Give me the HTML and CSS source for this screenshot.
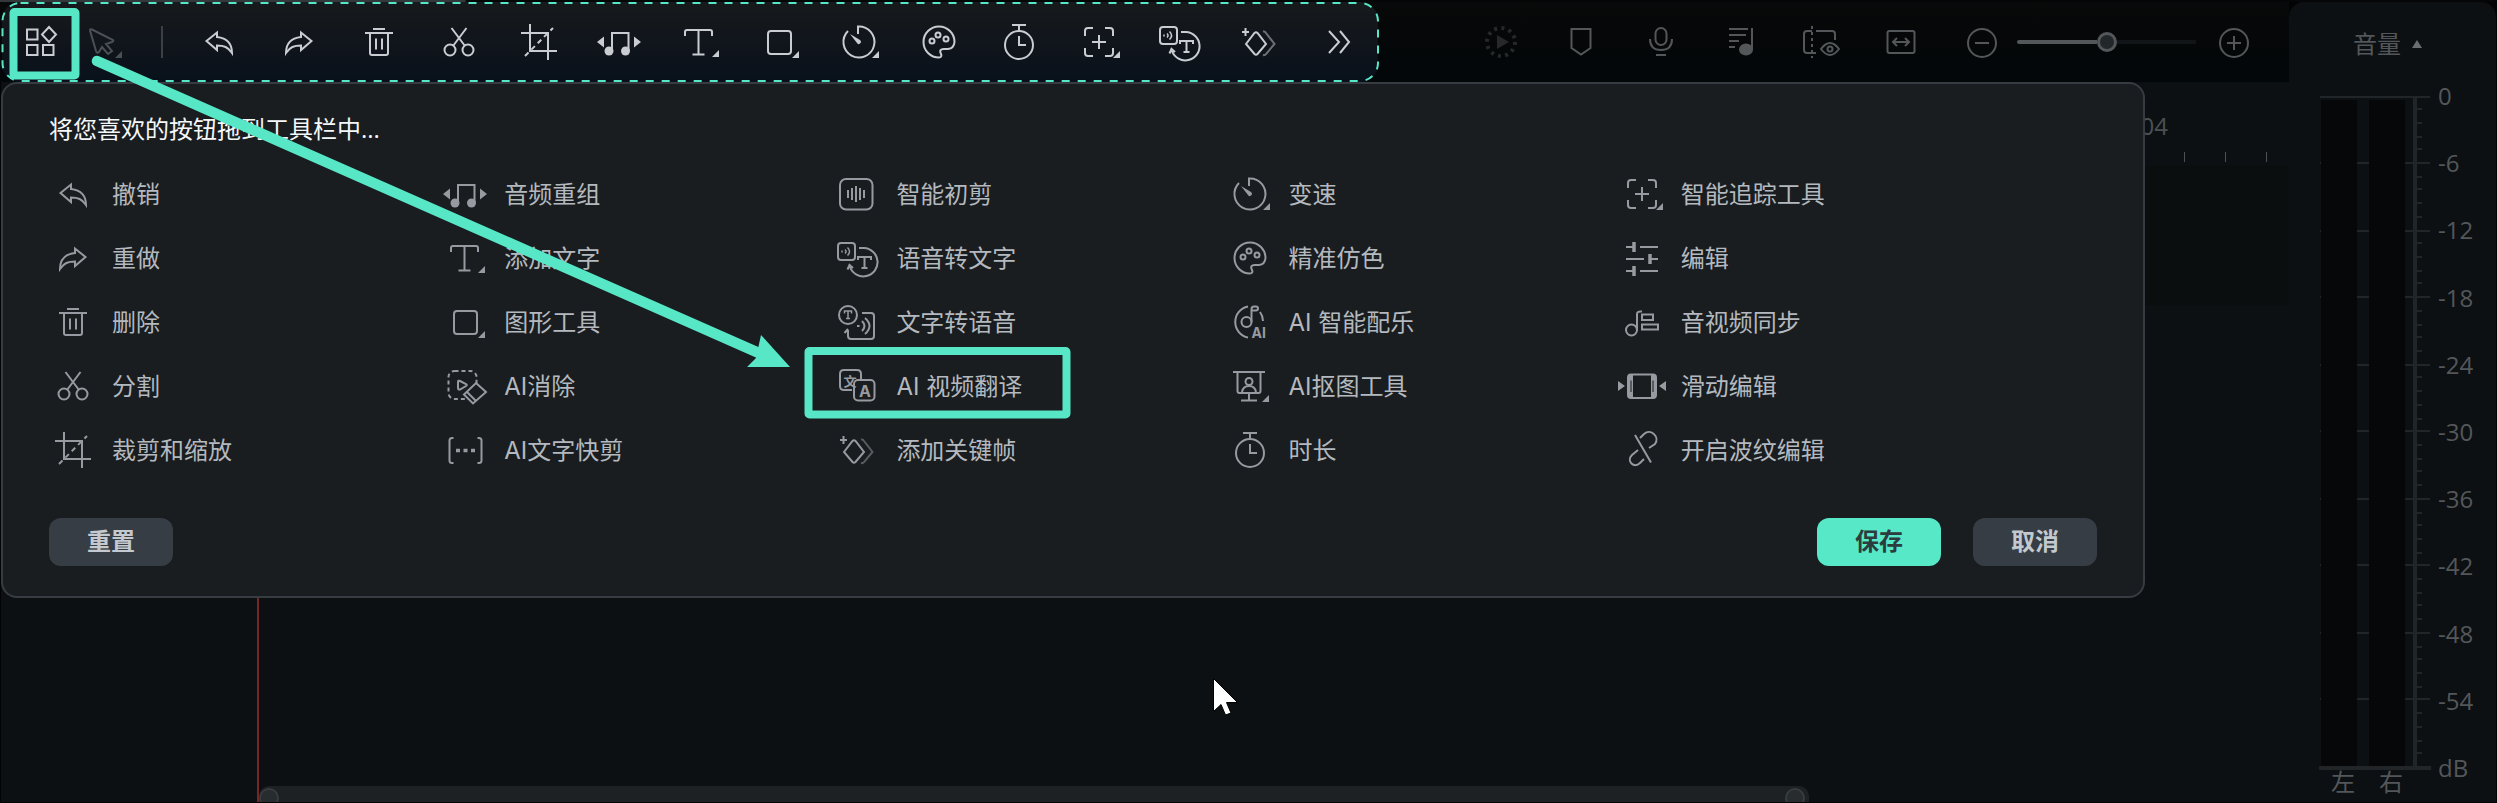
FILE: index.html
```html
<!DOCTYPE html>
<html lang="zh-CN">
<head>
    <meta charset="UTF-8">
    <title>自定义工具栏</title>
    <link rel="stylesheet" href="styles.css">
</head>
<body>
    <!-- 图标定义，原点在图标中心 -->
    <svg class="defs" width="0" height="0">
        <symbol id="grid" viewBox="-24 -24 48 48"><path d="M-14-12.500h10.500v10h-10.500zM-14 3h10.500v10h-10.500zM2 3h10.500v10H2zM8-15l7 7.500L8 0 1-7.500z"/></symbol>
        <symbol id="pointer" viewBox="-24 -24 48 48"><path d="M-14-11.500Q-14-13.500-12-12.500L9-2Q10-1 8 0L2 2l6 7-4 3-6-7-3 5Q-7 12-8 9z"/><path class="fill" d="M18 9v7h-7z"/></symbol>
        <symbol id="undo" viewBox="-24 -24 48 48"><path d="M-12.500-1L-2-9.500V-5C7-4 13 1 13 11 9 5 5 3.500-2 3.500V8z"/></symbol>
        <symbol id="redo" viewBox="-24 -24 48 48"><path d="M12.500-1L2-9.500V-5C-7-4-13 1-13 11-9 5-5 3.500 2 3.500V8z"/></symbol>
        <symbol id="trash" viewBox="-24 -24 48 48"><path d="M-6-13H6M-14-9h28M-9-9V11q0 2 2 2H7q2 0 2-2V-9M-3-3.500V7.500M3-3.500V7.500"/></symbol>
        <symbol id="cut" viewBox="-24 -24 48 48"><circle cx="-9" cy="8" r="5.500"/><circle cx="9" cy="8" r="5.500"/><path d="M-7.500-14L6 4M7.500-14L-6 4"/></symbol>
        <symbol id="crop" viewBox="-24 -24 48 48"><path d="M-9-18V9H18M-18-9H9V18"/><path stroke-dasharray="5 4" d="M-14 14L14-14"/></symbol>
        <symbol id="music" viewBox="-24 -24 48 48"><path d="M-7 9V-9H9.500V9"/><path class="fill" d="M-22 0l7-5.500V5.500zM22 0l-7-5.500V5.500z"/><ellipse class="fill" cx="-10" cy="9" rx="4.500" ry="4.500"/><ellipse class="fill" cx="6.500" cy="9" rx="4.500" ry="4.500"/></symbol>
        <symbol id="text" viewBox="-24 -24 48 48"><path d="M-14-6V-10Q-14-12-12-12H11Q13-12 13-10V-6M-.5-12V12.500M-6.500 12.500H5.500"/><path class="fill" d="M20 8v7h-7z"/></symbol>
        <symbol id="shape" viewBox="-24 -24 48 48"><rect x="-11" y="-11" width="23" height="23" rx="3"/><path class="fill" d="M20 9v7h-7z"/></symbol>
        <symbol id="speed" viewBox="-24 -24 48 48"><path d="M-1-8V-15.500A15.500 15.500 0 1 1-11-11"/><path class="fill" d="M-9-8L1-2Q3 0 1 1.500-1 3-2 1z"/><path class="fill" d="M20 9v7h-7z"/></symbol>
        <symbol id="palette" viewBox="-24 -24 48 48"><path d="M0 15.500A15.500 15.500 0 1 1 15.500 0Q15 6.500 9 7H5C0 7 1 10 2 12 3 14 2 15.500 0 15.500z"/><circle cx="-7" cy="-1" r="2.500"/><circle cx="-1" cy="-7" r="2.500"/><circle cx="7" cy="-3" r="2.500"/></symbol>
        <symbol id="timer" viewBox="-24 -24 48 48"><circle cy="3" r="14"/><path d="M-7-17H7M0-17V-11M0-6V3H7"/></symbol>
        <symbol id="track" viewBox="-24 -24 48 48"><path d="M-14-6V-11Q-14-14-11-14H-6M6-14H11Q14-14 14-11V-6M-14 6V11Q-14 14-11 14H-6M6 14H11Q14 14 14 11V6M-7 0H7M0-7V7"/><path class="fill" d="M21 9v7h-7z"/></symbol>
        <symbol id="stt" viewBox="-24 -24 48 48"><rect x="-19" y="-15" width="17" height="17" rx="3"/><path d="M2-10H7A14.200 14.200 0 1 1-7 9M-9.500 11.500L-7.500 7-4 10M1 2V-1H14V2M7.500-1V10M4.500 10H10.500"/><path class="thin" d="M-15-7.500v2M-12-8.500q2 2 0 4M-9.500-10.500q4 4 0 8"/></symbol>
        <symbol id="tts" viewBox="-24 -24 48 48"><circle cx="-9" cy="-7" r="9"/><path class="thin" d="M-12.500-8.500V-11H-5.500V-8.500M-9-11V-3.500M-11-3.500H-7"/><path d="M5-9H14Q17-9 17-6V14Q17 17 14 17H-6Q-9 17-9 14V8M-12.500 11L-9 7M5-1q5 5 0 10M8-4q9 8 0 16M0 4h2.500"/></symbol>
        <symbol id="translate" viewBox="-24 -24 48 48"><path d="M-5 4H-13Q-17 4-17 0V-12Q-17-16-13-16H0Q4-16 4-12V-7"/><rect x="-3" y="-6" width="20.500" height="20.500" rx="4"/><text x="-13.500" y="0" font-size="13">文</text><text x="2" y="10.500" font-size="16">A</text></symbol>
        <symbol id="keyframe" viewBox="-24 -24 48 48"><path d="M-17-10H-10M-13.500-14V-6M-13 2L-4.500-9Q-3-10.500-1.500-9L7 2-1.500 12Q-3 13.500-4.500 12z"/><path opacity=".5" d="M4-10.500Q6-11 7-9L15.500 2 7 12Q6 13.500 4 13"/></symbol>
        <symbol id="roughcut" viewBox="-24 -24 48 48"><rect x="-17" y="-15" width="32.500" height="30.500" rx="6"/><path d="M-9-4V4M-5-6V6M-1-8V8M3-6V6M7-4V4"/></symbol>
        <symbol id="erase" viewBox="-24 -24 48 48"><rect x="-16.500" y="-15" width="28" height="28" rx="6" stroke-dasharray="4 3"/><path d="M-7-4Q-7-6-5-5L1-2Q2.500-1 1 0L-5 3.500Q-7 4-7 2z"/><path class="mask" d="M11-3L21 6 8 17.500-1 8.500z"/><path d="M2 6L11 15"/></symbol>
        <symbol id="quickcut" viewBox="-24 -24 48 48"><path d="M-11.500-12H-13Q-15.500-12-15.500-9.500V10.500Q-15.500 13-13 13H-11.500M12.500-12H14Q16.500-12 16.500-9.500V10.500Q16.500 13 14 13H12.500"/><path stroke-width="3.500" d="M-9 .5h4M-1.500.5h4M6 .5h4"/></symbol>
        <symbol id="aimusic" viewBox="-24 -24 48 48"><path d="M-2-15.500A15.800 15.800 0 0 0-2 15.500M10-10Q13-6 13-1"/><circle cx="-3.500" cy="0" r="5"/><path d="M1.500 0V-13Q1.500-15.500 4-15.500H6Q8-15.500 8-13.500T6-11.500H2"/><text x="1.500" y="16" font-size="14">AI</text></symbol>
        <symbol id="matting" viewBox="-24 -24 48 48"><path d="M-17-14H15M-12.500-14V5Q-12.500 7-10.500 7H8.500Q10.500 7 10.500 5V-14M-1 7V14.500M-9 14.500H7M-8 6Q-7 0-1 0 5 0 6 6"/><circle cx="-1" cy="-4.500" r="3.500"/><path class="fill" d="M19 9v7h-7z"/></symbol>
        <symbol id="adjust" viewBox="-24 -24 48 48"><path d="M-16-11H-9M-2-11H16M-16 1H2M9 1H16M-16 13H-9M-2 13H16"/><path stroke-width="3.500" d="M-8-16V-6M8-4V6M-8 8V18"/></symbol>
        <symbol id="sync" viewBox="-24 -24 48 48"><ellipse cx="-10.500" cy="8" rx="5.500" ry="5.500"/><path d="M-5 8V-8Q-5-11 0-10.500M0-7.500H11V-2H0zM0 2.500H16V7.500H0z"/></symbol>
        <symbol id="slide" viewBox="-24 -24 48 48"><rect x="-14" y="-11.500" width="28" height="23.500" rx="3"/><path stroke-width="5" d="M-11.500-11V11.500M11.500-11V11.500"/><path class="slit" d="M-11-5.500V6M11-5.500V6"/><path class="fill" d="M-24-5l7 5-7 5zM24-5l-7 5 7 5z"/></symbol>
        <symbol id="ripple" viewBox="-24 -24 48 48"><path d="M-7-15L9 12.500M-2-12L2-16C9-22 18-13 13-6L7-2M-4 0L-10 5C-16 11-8 19-2 13L2 9"/></symbol>
        <symbol id="chevrons" viewBox="-24 -24 48 48"><path d="M-10-11L0 0-10 11M1-11L10 0 1 11"/></symbol>
        <symbol id="render" viewBox="-24 -24 48 48"><circle r="14" stroke-width="4" stroke-dasharray="3 4.330"/><path class="fill" d="M-4-7L8 0-4 7z"/></symbol>
        <symbol id="marker" viewBox="-24 -24 48 48"><path d="M-9.500-13H9.500V6L0 12.500-9.500 6z"/></symbol>
        <symbol id="mic" viewBox="-24 -24 48 48"><rect x="-5.500" y="-14" width="11" height="17" rx="5.500"/><path d="M-11-3Q-11 8 0 8 11 8 11-3M-5 13H5"/></symbol>
        <symbol id="playlist" viewBox="-24 -24 48 48"><path d="M-12-13H7M-12-7H5M-12-1H-2M-12 5H-6M11-14V8"/><ellipse class="fill" cx="5" cy="7.500" rx="7" ry="6"/></symbol>
        <symbol id="preview" viewBox="-24 -24 48 48"><path d="M-5-11H11Q14-11 14-8V-2M-5 11H-14Q-17 11-17 8V-8Q-17-11-14-11H-9"/><path stroke-dasharray="3 3" d="M-9-16V16"/><path d="M0 7Q9-5 18 7 9 19 0 7z"/><circle cx="9" cy="7" r="2.500"/></symbol>
        <symbol id="fit" viewBox="-24 -24 48 48"><rect x="-13.500" y="-11" width="27" height="22" rx="2"/><path d="M-7 0H7M-4-4L-8 0-4 4M4-4L8 0 4 4"/></symbol>
        <symbol id="minus" viewBox="-24 -24 48 48"><circle cy="1" r="14"/><path d="M-7 1H7"/></symbol>
        <symbol id="plus" viewBox="-24 -24 48 48"><circle cy="1" r="14"/><path d="M-7 1H7M0-6V8"/></symbol>
    </svg>

    <div class="app">
        <div class="main">
            <div class="toolbar">
                <div class="tools">
                    <svg class="icon grid-btn"><use href="#grid"/></svg>
                    <svg class="icon pointer-btn"><use href="#pointer"/></svg>
                    <span class="divider"></span>
                    <div class="tool-list" id="toolList"></div>
                </div>
                <div class="tools-right">
                    <svg class="icon faint"><use href="#render"/></svg>
                    <svg class="icon"><use href="#marker"/></svg>
                    <svg class="icon"><use href="#mic"/></svg>
                    <svg class="icon"><use href="#playlist"/></svg>
                    <svg class="icon"><use href="#preview"/></svg>
                    <svg class="icon"><use href="#fit"/></svg>
                </div>
                <div class="zoom">
                    <svg class="icon"><use href="#minus"/></svg>
                    <div class="slider"><span class="slider-on"></span><span class="knob"></span><span class="slider-off"></span></div>
                    <svg class="icon"><use href="#plus"/></svg>
                </div>
            </div>
            <div class="ruler">
                <span class="time">04</span>
                <i></i><i></i><i></i>
            </div>
            <div class="tracks">
                <div class="track-head"></div>
                <div class="track-body">
                    <div class="scrollbar"><span></span><span></span></div>
                </div>
            </div>
        </div>

        <div class="volume">
            <div class="volume-title">音量 <span class="up"></span></div>
            <div class="meter">
                <svg class="scale" width="114" height="676" id="scale"></svg>
                <div class="db" id="db"></div>
            </div>
            <div class="channels"><span>左</span><span>右</span></div>
        </div>
    </div>

    <div class="popup">
        <div class="popup-title">将您喜欢的按钮拖到工具栏中...</div>
        <div class="items" id="items"></div>
        <div class="actions">
            <button class="btn">重置</button>
            <button class="btn save">保存</button>
            <button class="btn">取消</button>
        </div>
    </div>

    <!-- 标注 -->
    <svg class="marks" width="2497" height="803">
        <rect class="dashed" x="2.500" y="3" width="1375.500" height="78" rx="18"/>
        <rect class="box" x="13.500" y="12" width="62" height="63.500" rx="1"/>
        <rect class="box" x="808.500" y="351" width="258" height="63.500" rx="1"/>
        <path class="line" d="M97 61L758 352.600"/>
        <path class="head" d="M761 335L790 367H747L756 358z"/>
        <path class="mouse" d="M1213.500 678.500V711.500L1221 704.500 1225.500 715 1231 713 1226.500 702.500H1237.500z"/>
    </svg>

    <script>
        const tools = ['undo', 'redo', 'trash', 'cut', 'crop', 'music', 'text', 'shape', 'speed',
            'palette', 'timer', 'track', 'stt', 'keyframe', 'chevrons'];
        document.getElementById('toolList').innerHTML =
            tools.map(t => `<svg class="icon"><use href="#${t}"/></svg>`).join('');

        // 每列五个，按列排列
        const items = [
            ['undo', '撤销'], ['redo', '重做'], ['trash', '删除'], ['cut', '分割'], ['crop', '裁剪和缩放'],
            ['music', '音频重组'], ['text', '添加文字'], ['shape', '图形工具'], ['erase', 'AI消除'], ['quickcut', 'AI文字快剪'],
            ['roughcut', '智能初剪'], ['stt', '语音转文字'], ['tts', '文字转语音'], ['translate', 'AI 视频翻译'], ['keyframe', '添加关键帧'],
            ['speed', '变速'], ['palette', '精准仿色'], ['aimusic', 'AI 智能配乐'], ['matting', 'AI抠图工具'], ['timer', '时长'],
            ['track', '智能追踪工具'], ['adjust', '编辑'], ['sync', '音视频同步'], ['slide', '滑动编辑'], ['ripple', '开启波纹编辑']
        ];
        document.getElementById('items').innerHTML = items.map(([icon, name]) =>
            `<div class="item"><svg class="icon"><use href="#${icon}"/></svg><span>${name}</span></div>`).join('');

        // 音量刻度
        const step = 67.1;
        let lines = '';
        for (let i = 0; i < 10; i++) {
            const y = Math.round((1 + i * step) / 2) * 2 - 1;
            lines += `<rect class="tick" x="1" y="${y}" width="110" height="2"/>`;
            for (let j = 1; j < 5; j++) {
                const m = Math.round((1 + i * step + j * step / 5) / 2) * 2 - 1;
                lines += `<rect class="tick" x="98" y="${m}" width="5" height="2"/>`;
            }
        }
        lines += '<rect class="bar" x="2" y="5" width="36" height="667"/><rect class="bar" x="50" y="5" width="36" height="667"/>';
        lines += '<rect class="tick" x="94" y="1" width="4" height="670"/><rect class="tick" x="0" y="671" width="112" height="4"/>';
        document.getElementById('scale').innerHTML = lines;
        document.getElementById('db').innerHTML =
            ['0', '-6', '-12', '-18', '-24', '-30', '-36', '-42', '-48', '-54', 'dB'].map(t => `<span>${t}</span>`).join('');
    </script>
</body>
</html>
```
FILE: styles.css
```css
* {
    box-sizing: border-box;
}
body {
    margin: 0;
    width: 2497px;
    height: 803px;
    overflow: hidden;
    background-color: #020304;
    font-family: "Open Sans", "Noto Sans CJK SC", sans-serif;
    font-size: 24px;
    color: #b4b9bf;
}
.defs {
    display: none;
}
.icon {
    display: block;
    width: 48px;
    height: 48px;
    flex: none;
    overflow: visible;
    fill: none;
    stroke: currentColor;
    stroke-width: 2;
}
symbol {
    overflow: visible;
}
.fill {
    fill: currentColor;
    stroke: none;
}
.mask {
    fill: #191d20;
}
.slit {
    stroke: #191d20;
    stroke-width: 1;
}
.thin {
    stroke-width: 1.5;
}
symbol text {
    fill: currentColor;
    stroke: none;
    font-weight: 700;
}
.app {
    display: flex;
    height: 803px;
    border-top: 2px solid #050607;
    border-image: linear-gradient(90deg, #33383c 466px, #050607 468px) 2;
}
.main {
    width: 2289px;
    display: flex;
    flex-direction: column;
}
.toolbar {
    height: 80px;
    display: flex;
    align-items: center;
    background: linear-gradient(#080909, #050708 50%, #02070a);
    color: #53575a;
}
.tools {
    width: 1376px;
    height: 80px;
    margin-left: 2px;
    display: flex;
    align-items: center;
    border-radius: 18px;
    background: linear-gradient(#161a1c, #11151c 50%, #08111a);
    color: #c9cdd2;
}
.grid-btn {
    margin-left: 15px;
}
.pointer-btn {
    margin-left: 15px;
    color: #4b5056;
}
.divider {
    width: 2px;
    height: 32px;
    margin: 0 16px 0 33px;
    background-color: #3a4046;
}
.tool-list {
    display: flex;
    gap: 32px;
    margin-left: 16px;
}
.tools-right {
    display: flex;
    gap: 32px;
    margin-left: 99px;
}
.faint {
    color: #25292c;
}
.zoom {
    display: flex;
    align-items: center;
    margin-left: 33px;
}
.slider {
    display: flex;
    align-items: center;
    width: 179px;
    margin: 0 14px 0 11px;
}
.slider-on {
    width: 80px;
    height: 4px;
    border-radius: 2px 0 0 2px;
    background-color: #53575a;
}
.slider-off {
    flex: 1;
    height: 4px;
    background-color: #111517;
}
.knob {
    width: 20px;
    height: 20px;
    border: 3px solid #53575a;
    border-radius: 50%;
    background-color: #22272a;
}
.ruler {
    height: 83px;
    display: flex;
    align-items: flex-end;
    justify-content: flex-end;
    gap: 40px;
    padding: 0 22px 3px 0;
    margin-left: 1px;
    background-color: #0c1013;
}
.ruler i {
    width: 1px;
    height: 10px;
    background-color: #4c5053;
}
.time {
    align-self: center;
    margin: 7px -24px 0 0;
    color: #4c5053;
}
.tracks {
    flex: 1;
    display: flex;
    margin: 0 0 1px 1px;
    background: linear-gradient(#0b0e0f 140px, #0c1013 140px);
}
.track-head {
    width: 258px;
    border-right: 2px solid #752825;
}
.track-body {
    flex: 1;
    display: flex;
    align-items: flex-end;
    overflow: hidden;
}
.scrollbar {
    width: 1550px;
    height: 16px;
    padding: 2px 4px 0 0;
    display: flex;
    justify-content: space-between;
    border-radius: 10px 10px 0 0;
    background-color: #1d2123;
}
.scrollbar span {
    width: 20px;
    height: 20px;
    border: 2px solid #373c3f;
    border-radius: 50%;
    background-color: #272c2f;
}
.volume {
    width: 207px;
    height: 800px;
    border-radius: 15px 15px 0 0;
    background-color: #0c1012;
    color: #54575a;
}
.volume-title {
    height: 93px;
    padding: 24px 0 0 64px;
    display: flex;
    gap: 11px;
    line-height: 36px;
}
.up {
    margin-top: 14px;
    width: 10px;
    height: 8px;
    background-color: #6b6e70;
    clip-path: polygon(50% 0, 100% 100%, 0 100%);
}
.meter {
    display: flex;
    height: 676px;
    padding-left: 30px;
}
.tick {
    fill: #212528;
}
.bar {
    fill: #050708;
}
.db {
    display: flex;
    flex-direction: column;
    margin: -16px 0 0 5px;
}
.db span {
    flex: none;
    height: 67.2px;
    line-height: 34px;
}
.channels {
    display: flex;
    gap: 24px;
    padding-left: 42px;
    margin-top: -7px;
    line-height: 36px;
}
.popup {
    position: absolute;
    left: 1px;
    top: 82px;
    width: 2144px;
    height: 516px;
    padding: 27px 46px 30px;
    display: flex;
    flex-direction: column;
    border: 2px solid #363c41;
    border-radius: 16px;
    background-color: #191d20;
}
.popup-title {
    height: 36px;
    line-height: 36px;
    color: #f5f7f8;
}
.items {
    display: grid;
    grid-template-rows: repeat(5, 64px);
    grid-auto-columns: 392.200px;
    grid-auto-flow: column;
    margin-top: 16px;
    font-family: Inter, "Noto Sans CJK SC", sans-serif;
    line-height: 36px;
}
.item {
    display: flex;
    align-items: center;
    gap: 15px;
    white-space: nowrap;
}
.item .icon {
    margin-top: -2px;
    color: #979ba1;
}
.actions {
    display: flex;
    gap: 32px;
    margin-top: auto;
}
.btn {
    width: 124px;
    height: 48px;
    padding: 0 0 2px;
    border: none;
    border-radius: 12px;
    background-color: #363d44;
    color: #c3c9cf;
    font: inherit;
    font-weight: 700;
    line-height: 36px;
}
.btn.save {
    margin-left: auto;
    background-color: #57e8c8;
    color: #2d3c3e;
}
.marks {
    position: absolute;
    left: 0;
    top: 0;
    fill: none;
    stroke: #57e6c6;
}
.dashed {
    stroke-width: 2;
    stroke-dasharray: 8 8;
}
.box {
    stroke-width: 8;
}
.line {
    stroke-width: 10.5;
    stroke-linecap: round;
}
.head {
    fill: #57e6c6;
    stroke: none;
}
.mouse {
    fill: #fff;
    stroke: #000;
    stroke-width: 1;
}
```
